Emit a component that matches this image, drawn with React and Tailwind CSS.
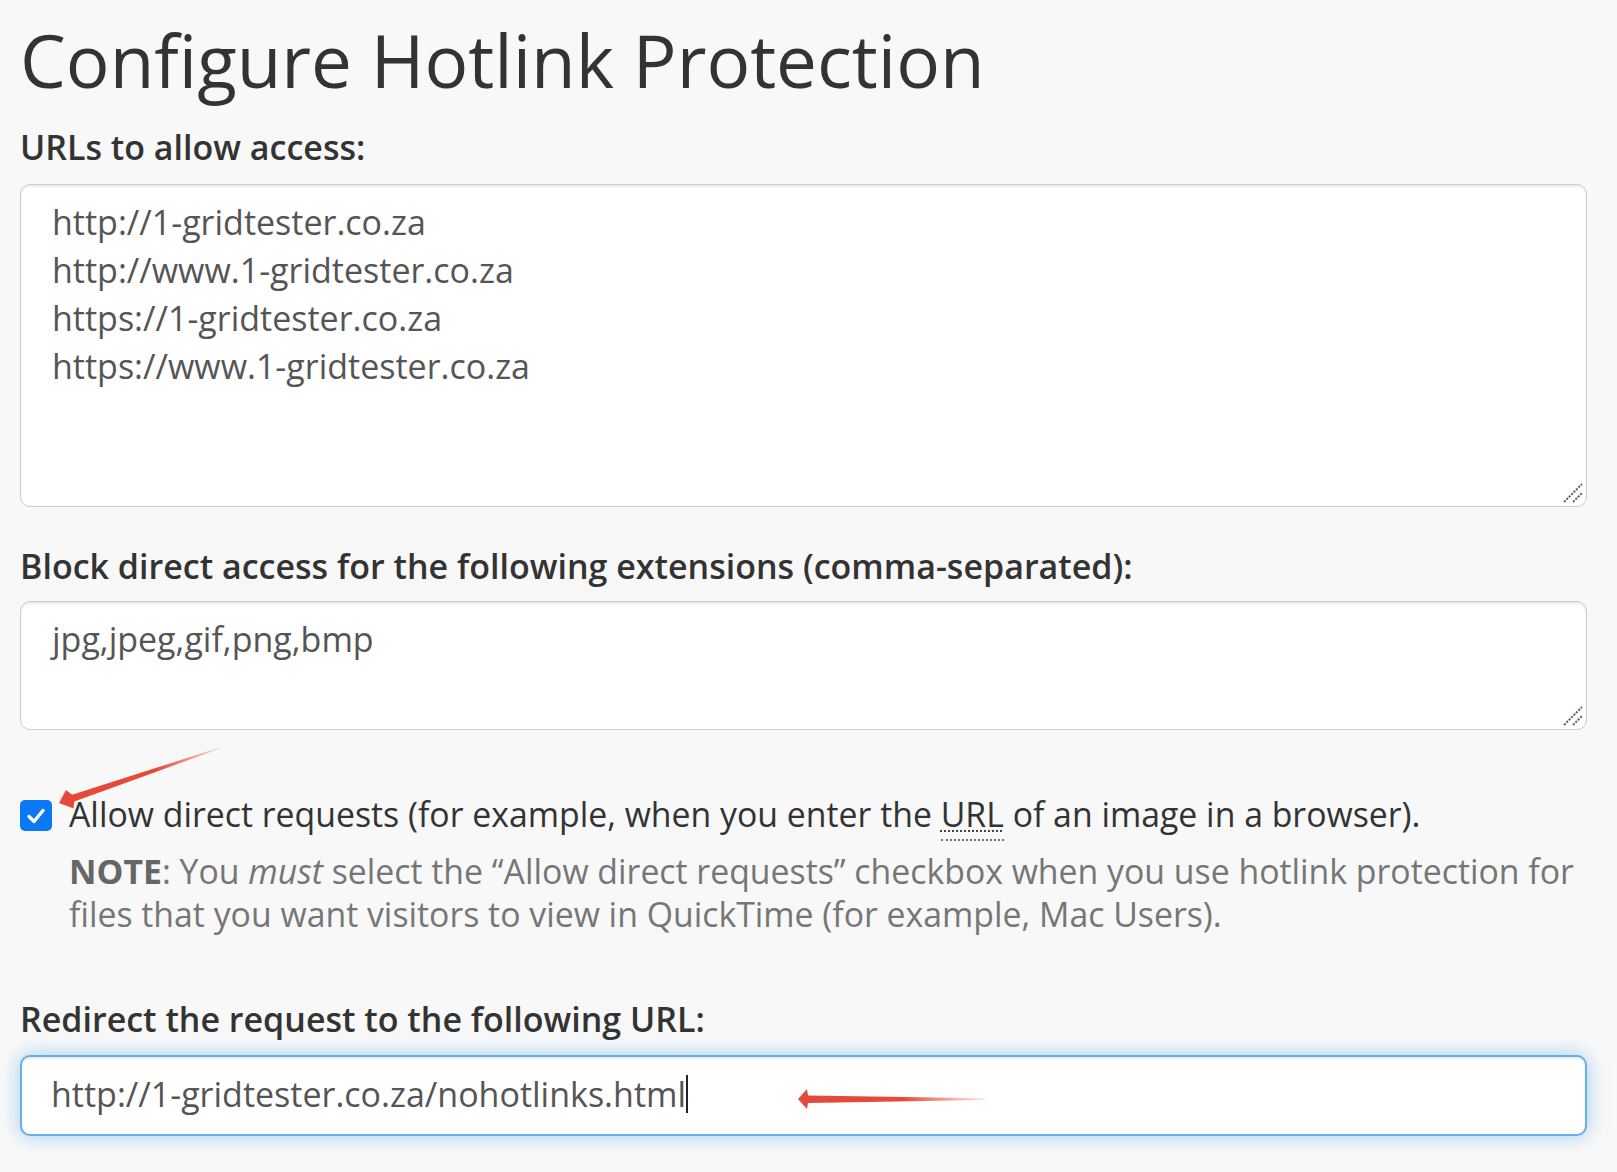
import React from "react";

const allowed = [
  "http://1-gridtester.co.za",
  "http://www.1-gridtester.co.za",
  "https://1-gridtester.co.za",
  "https://www.1-gridtester.co.za",
];

function Grip() {
  return (
    <svg
      className="absolute bottom-[3px] right-[3px] pointer-events-none"
      width="22"
      height="22"
      viewBox="0 0 22 22"
    >
      <line x1="2" y1="20" x2="20" y2="2" stroke="#666" strokeWidth="2" strokeDasharray="2.2 1.2" />
      <line x1="11" y1="20" x2="20" y2="11" stroke="#666" strokeWidth="2" strokeDasharray="2.2 1.2" />
    </svg>
  );
}

function Arrows() {
  return (
    <svg
      className="absolute inset-0 pointer-events-none"
      width="1617"
      height="1172"
      viewBox="0 0 1617 1172"
    >
      <defs>
        <linearGradient id="a1" gradientUnits="userSpaceOnUse" x1="59" y1="803" x2="220" y2="748">
          <stop offset="0" stopColor="#e4493a" />
          <stop offset="0.6" stopColor="#e4493a" />
          <stop offset="1" stopColor="#e4493a" stopOpacity="0.15" />
        </linearGradient>
        <linearGradient id="a2" gradientUnits="userSpaceOnUse" x1="798" y1="1099" x2="985" y2="1099">
          <stop offset="0" stopColor="#e4493a" />
          <stop offset="0.55" stopColor="#e4493a" />
          <stop offset="1" stopColor="#e4493a" stopOpacity="0.1" />
        </linearGradient>
      </defs>
      <polygon
        fill="url(#a1)"
        points="59,803 66,790 72.1,794.8 219.8,747.4 220.2,748.6 74.3,801.5 73.5,808.5"
      />
      <polygon
        fill="url(#a2)"
        points="798,1099 807,1089 808,1095.5 985,1098.2 985,1100 808,1103 807,1109"
      />
    </svg>
  );
}

export default function App() {
  return (
    <div className="relative min-h-screen bg-[#f8f8f8] pl-[20px] pr-[30px] pt-[20px] text-[#333] font-['Open_Sans','Liberation_Sans',sans-serif]">
      <h1 className="text-[72.8px] leading-[79px] font-normal text-[#333]">
        Configure Hotlink Protection
      </h1>

      <label className="block mt-[24px] text-[34px] leading-[48px] font-semibold">
        URLs to allow access:
      </label>
      <div className="relative mt-[13px]">
        <textarea
          readOnly
          defaultValue={allowed.join("\n")}
          className="block w-full h-[323px] resize-none rounded-[10px] border border-[#ccc] bg-white px-[31px] pt-[13px] text-[34px] leading-[48px] text-[#555] shadow-[inset_0_2px_2px_rgba(0,0,0,0.08)] outline-none"
        />
        <Grip />
      </div>

      <label className="block mt-[35px] text-[34px] leading-[48px] font-semibold">
        Block direct access for the following extensions (comma-separated):
      </label>
      <div className="relative mt-[11px]">
        <textarea
          readOnly
          defaultValue="jpg,jpeg,gif,png,bmp"
          className="block w-full h-[129px] resize-none rounded-[10px] border border-[#ccc] bg-white px-[31px] pt-[13px] text-[34px] leading-[48px] text-[#555] shadow-[inset_0_2px_2px_rgba(0,0,0,0.08)] outline-none"
        />
        <Grip />
      </div>

      <div className="mt-[60px] flex items-start">
        <div className="mt-[10px] flex h-[31px] w-[32px] shrink-0 items-center justify-center rounded-[5px] bg-[#0b78f5]">
          <svg width="20" height="18" viewBox="0 0 20 18">
            <polyline
              points="3,9.5 8,14.5 17,3.5"
              fill="none"
              stroke="#fff"
              strokeWidth="3.4"
              strokeLinecap="round"
              strokeLinejoin="round"
            />
          </svg>
        </div>
        <div className="ml-[17px] flex-1">
          <div className="text-[33.8px] leading-[48px] text-[#333]">
            Allow direct requests (for example, when you enter the{" "}
            <abbr className="underline decoration-dotted decoration-[#444] decoration-2 underline-offset-[3px] border-b-2 border-dotted border-[#777] pb-[2px]">
              URL
            </abbr>{" "}
            of an image in a browser).
          </div>
          <p className="mt-[12px] text-[33.8px] leading-[43px] text-[#767676]">
            <strong className="font-bold text-[#666]">NOTE</strong>: You <em>must</em> select the
            “Allow direct requests” checkbox when you use hotlink protection for files that you
            want visitors to view in QuickTime (for example, Mac Users).
          </p>
        </div>
      </div>

      <label className="block mt-[59px] text-[34px] leading-[48px] font-semibold">
        Redirect the request to the following URL:
      </label>
      <div className="mt-[12px] h-[81px] w-full rounded-[10px] border-2 border-[#66afe9] bg-white px-[29px] pt-[13px] text-[34px] leading-[48px] text-[#555] shadow-[inset_0_2px_2px_rgba(0,0,0,0.075),0_0_19px_rgba(102,175,233,0.6)]">
        http://1-gridtester.co.za/nohotlinks.html
        <span className="inline-block h-[38px] w-[2px] bg-[#222] align-[-6px]" />
      </div>
      <div className="h-[40px]" />

      <Arrows />
    </div>
  );
}
